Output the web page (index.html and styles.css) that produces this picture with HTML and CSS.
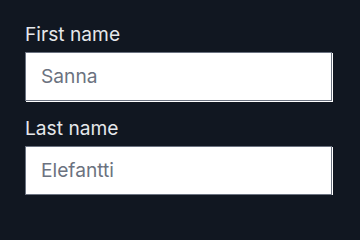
FILE: index.html
```html
<!DOCTYPE html>
<html lang="en">
<head>
<meta charset="utf-8">
<link rel="stylesheet" href="styles.css">
</head>
<body>
<form class="form">
  <label class="field">
    <span class="label">First name</span>
    <input class="input" type="text" placeholder="Sanna">
  </label>
  <label class="field">
    <span class="label">Last name</span>
    <input class="input" type="text" placeholder="Elefantti">
  </label>
</form>
</body>
</html>
```
FILE: styles.css
```css
html, body {
  margin: 0;
  padding: 0;
  background: #111721;
}
body {
  font-family: Inter, "Noto Sans", sans-serif;
  padding: 20px 0 0 25px;
}
.form {
  display: flex;
  flex-direction: column;
  gap: 13px;
  width: 307px;
}
.field {
  display: flex;
  flex-direction: column;
  gap: 3.2px;
}
.label {
  font-size: 19.2px;
  line-height: 28.8px;
  color: #e5e7eb;
}
.input {
  box-sizing: border-box;
  width: 307px;
  height: 49px;
  margin: 0;
  padding: 0 15px;
  border: 1px solid #6b7280;
  border-radius: 0;
  box-shadow: 1px 1px 0 #ffffff;
  background: #ffffff;
  font-family: Inter, "Noto Sans", sans-serif;
  font-size: 19.2px;
  color: #111827;
  outline: none;
}
.input::placeholder {
  color: #6b7280;
  opacity: 1;
}
```
